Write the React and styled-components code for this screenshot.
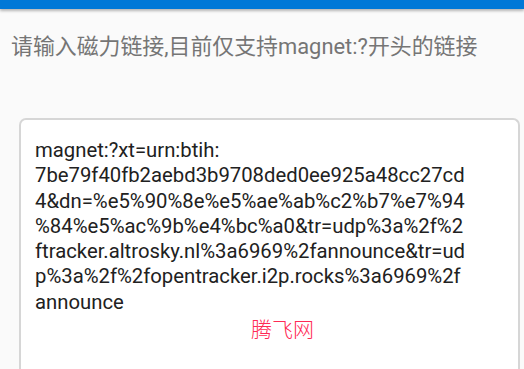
import styled, { createGlobalStyle } from "styled-components";

const Global = createGlobalStyle`
  html, body {
    margin: 0;
    padding: 0;
    background: #fafafa;
    overflow: hidden;
  }
  body {
    font-family: Roboto, "Noto Sans CJK SC", sans-serif;
  }
`;

const Screen = styled.div`
  width: 524px;
  height: 369px;
  display: flex;
  flex-direction: column;
  background: #fafafa;
  overflow: hidden;
`;

const TopBar = styled.div`
  height: 9px;
  flex-shrink: 0;
  background: #0078d7;
  box-shadow: 0 2px 3px rgba(0, 0, 0, 0.28);
`;

const Hint = styled.div`
  padding: 25px 0 0 11px;
  height: 82px;
  box-sizing: border-box;
  font-family: Roboto, "Noto Sans CJK SC", sans-serif;
  font-size: 21.9px;
  line-height: 26px;
  color: #757575;
  white-space: nowrap;
`;

const Card = styled.div`
  margin: 27px 0 0 19px;
  width: 501px;
  flex: 1;
  box-sizing: border-box;
  background: #ffffff;
  border: 2px solid #d6d6d6;
  border-bottom: none;
  border-radius: 7px 7px 0 0;
  padding: 18px 0 0 14px;
`;

const Line = styled.div`
  font-family: Roboto, sans-serif;
  font-size: 20.3px;
  line-height: 25.3px;
  color: #212121;
  white-space: nowrap;
`;

const Watermark = styled.div`
  margin: 1px 0 0 216px;
  font-family: "Noto Sans CJK SC", sans-serif;
  font-weight: 300;
  font-size: 21px;
  line-height: 24px;
  color: #ff2a55;
`;

const lines = [
  "magnet:?xt=urn:btih:",
  "7be79f40fb2aebd3b9708ded0ee925a48cc27cd",
  "4&dn=%e5%90%8e%e5%ae%ab%c2%b7%e7%94",
  "%84%e5%ac%9b%e4%bc%a0&tr=udp%3a%2f%2",
  "ftracker.altrosky.nl%3a6969%2fannounce&tr=ud",
  "p%3a%2f%2fopentracker.i2p.rocks%3a6969%2f",
  "announce",
];

export default function App() {
  return (
    <Screen>
      <Global />
      <TopBar />
      <Hint>请输入磁力链接,目前仅支持magnet:?开头的链接</Hint>
      <Card>
        {lines.map((l) => (
          <Line key={l}>{l}</Line>
        ))}
        <Watermark>腾飞网</Watermark>
      </Card>
    </Screen>
  );
}
